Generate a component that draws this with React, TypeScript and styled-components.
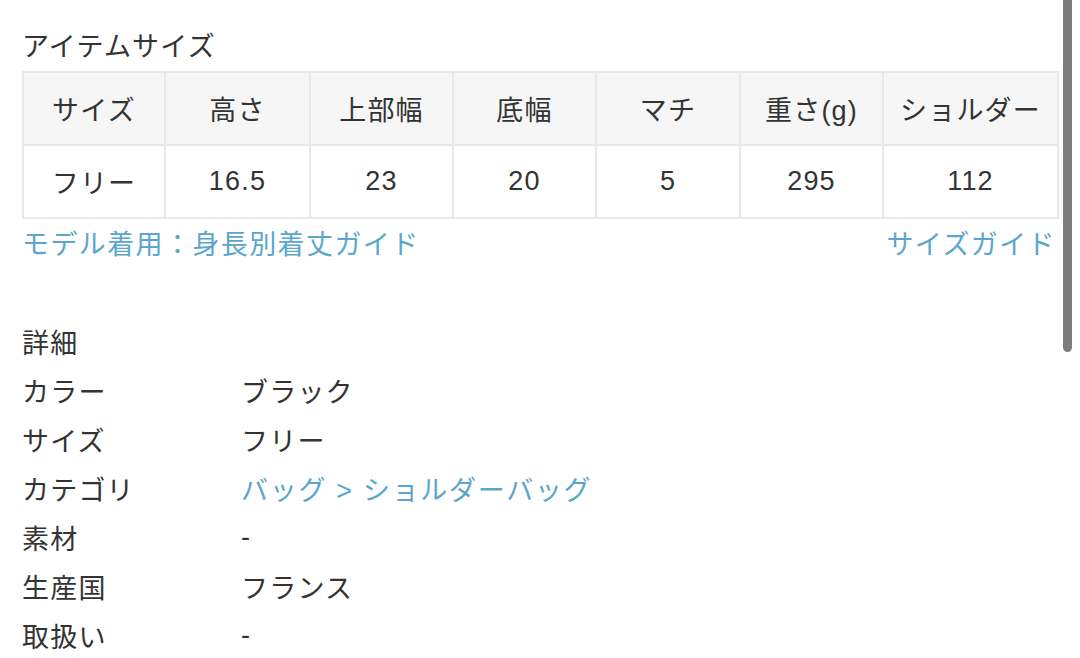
import styled, { createGlobalStyle } from "styled-components";

const GlobalStyle = createGlobalStyle`
  html, body {
    margin: 0;
    padding: 0;
    background: #fff;
  }
  body {
    font-family: "Liberation Sans", "Noto Sans CJK JP", sans-serif;
    color: #333;
    letter-spacing: 1.2px;
  }
`;

const Page = styled.div`
  width: 1035px;
  padding: 28px 0 0 22px;
`;

const SectionTitle = styled.h2`
  margin: 0;
  font-size: 27px;
  font-weight: 400;
  line-height: 38px;
`;

const SizeTable = styled.table`
  margin-top: 5px;
  width: 1035px;
  table-layout: fixed;
  border-collapse: collapse;
  border: 2px solid #e8e8e8;
`;

const Cell = styled.td<{ $head?: boolean }>`
  height: 71px;
  padding: 0;
  border: 2px solid #e8e8e8;
  background: ${(p) => (p.$head ? "#f6f6f6" : "#fff")};
  text-align: center;
  vertical-align: middle;
  font-size: 27px;
  font-weight: 400;
  color: #333;
`;

const LinkRow = styled.div`
  display: flex;
  justify-content: space-between;
  margin-top: 7px;
  padding-right: 1px;
`;

const TextLink = styled.a`
  font-size: 27px;
  line-height: 38px;
  color: #5aa6cc;
  text-decoration: none;
  letter-spacing: 1.4px;
`;

const DetailTitle = styled(SectionTitle)`
  margin-top: 61px;
`;

const DetailList = styled.dl`
  margin: 3px 0 0;
`;

const DetailRow = styled.div`
  display: grid;
  grid-template-columns: 219px 1fr;
  height: 49px;
  align-items: center;
  font-size: 27px;
`;

const Term = styled.dt`
  margin: 0;
`;

const Value = styled.dd<{ $link?: boolean }>`
  margin: 0;
  color: ${(p) => (p.$link ? "#5aa6cc" : "#333")};
  letter-spacing: ${(p) => (p.$link ? "1.7px" : "1.2px")};
`;

const Scrollbar = styled.div`
  position: fixed;
  top: 0;
  right: 8px;
  width: 9px;
  height: 352px;
  background: #7c7c7c;
  border-radius: 0 0 5px 5px;
`;

const widths = [142, 145, 143, 143, 144, 143, 175];
const heads = ["サイズ", "高さ", "上部幅", "底幅", "マチ", "重さ(g)", "ショルダー"];
const values = ["フリー", "16.5", "23", "20", "5", "295", "112"];

const details: { term: string; value: string; link?: boolean }[] = [
  { term: "カラー", value: "ブラック" },
  { term: "サイズ", value: "フリー" },
  { term: "カテゴリ", value: "バッグ > ショルダーバッグ", link: true },
  { term: "素材", value: "-" },
  { term: "生産国", value: "フランス" },
  { term: "取扱い", value: "-" },
];

export default function App() {
  return (
    <>
      <GlobalStyle />
      <Page>
        <SectionTitle>アイテムサイズ</SectionTitle>
        <SizeTable>
          <colgroup>
            {widths.map((w, i) => (
              <col key={i} style={{ width: w }} />
            ))}
          </colgroup>
          <tbody>
            <tr>
              {heads.map((h) => (
                <Cell as="th" $head key={h}>
                  {h}
                </Cell>
              ))}
            </tr>
            <tr>
              {values.map((v, i) => (
                <Cell key={i}>{v}</Cell>
              ))}
            </tr>
          </tbody>
        </SizeTable>
        <LinkRow>
          <TextLink href="#">モデル着用：身長別着丈ガイド</TextLink>
          <TextLink href="#">サイズガイド</TextLink>
        </LinkRow>
        <DetailTitle>詳細</DetailTitle>
        <DetailList>
          {details.map((d) => (
            <DetailRow key={d.term}>
              <Term>{d.term}</Term>
              <Value $link={d.link}>{d.value}</Value>
            </DetailRow>
          ))}
        </DetailList>
      </Page>
      <Scrollbar />
    </>
  );
}
